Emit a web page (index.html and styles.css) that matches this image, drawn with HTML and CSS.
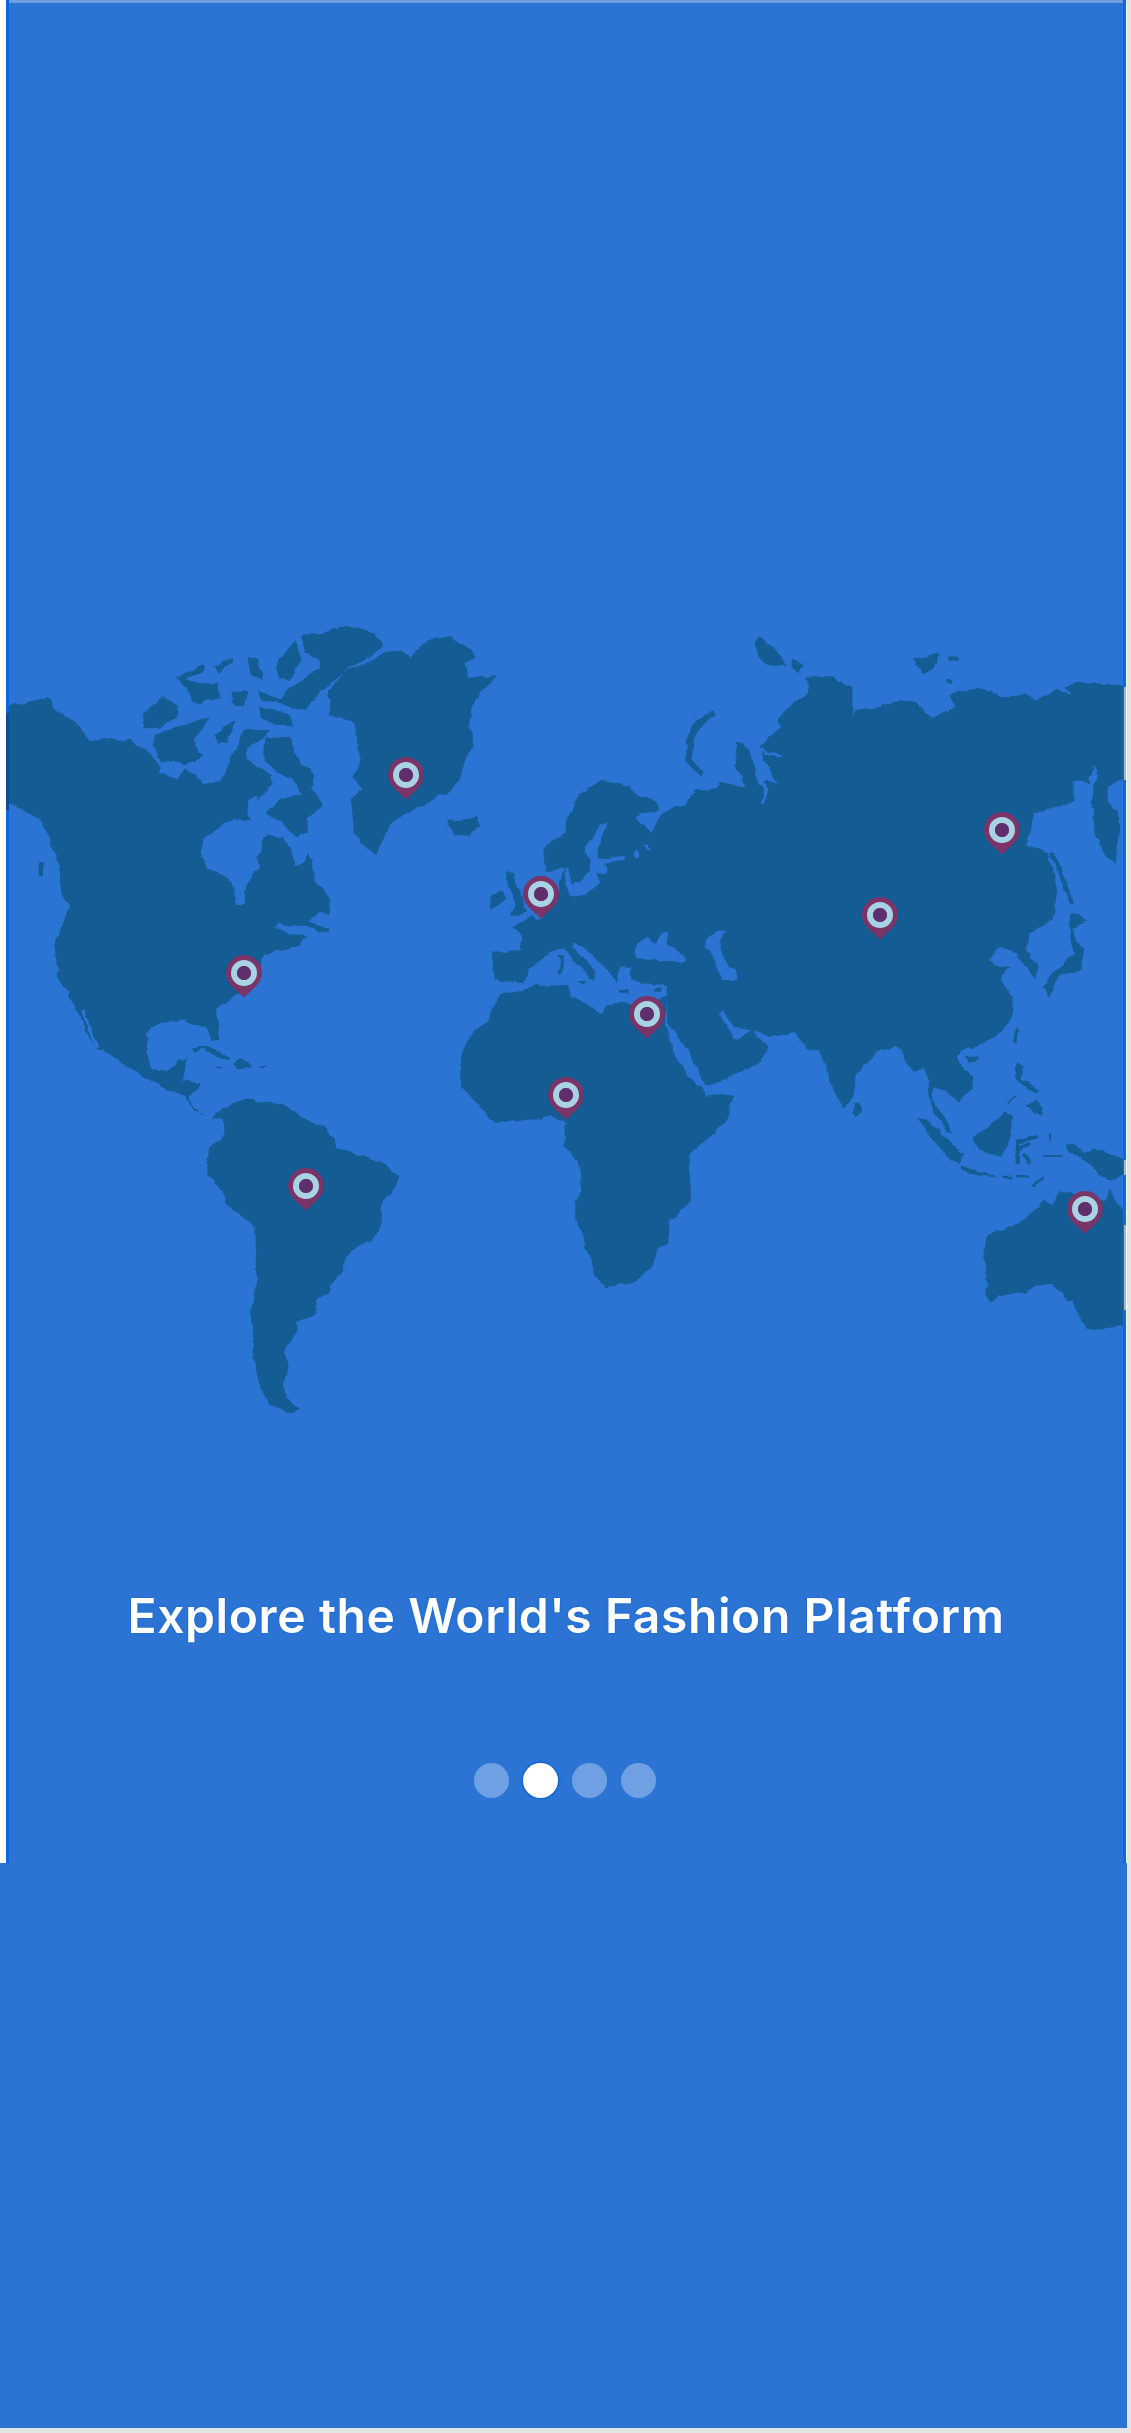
FILE: index.html
```html
<!DOCTYPE html>
<html lang="en">
<head>
<meta charset="UTF-8">
<meta name="viewport" content="width=device-width, initial-scale=1.0">
<title>Explore</title>
<link rel="stylesheet" href="styles.css">
</head>
<body>
<div class="screen">
    <div class="slide">
        <svg class="world-map" viewBox="6 620 1120 800" width="1120" height="800">
            <defs>
                <filter id="coast" x="-2%" y="-2%" width="104%" height="104%" color-interpolation-filters="sRGB">
                    <feTurbulence type="fractalNoise" baseFrequency=".07" numOctaves="3" seed="4" result="noise"/>
                    <feDisplacementMap in="SourceGraphic" in2="noise" scale="7" xChannelSelector="R" yChannelSelector="G"/>
                    <feGaussianBlur stdDeviation=".6"/>
                </filter>
                <g id="pin">
                    <path class="pin-body" d="M0 25C-4 19-18 12-18 0A18 18 0 1 1 18 0C18 12 4 19 0 25Z"/>
                    <circle class="pin-ring" r="10"/>
                    <circle class="pin-dot" r="7"/>
                </g>
            </defs>

            <g class="geo">
            <!-- north america, greenland, arctic islands -->
            <g class="land" transform="translate(0 600) scale(.3636 .3333)">
                <path d="M-20 335L60 310 130 295 155 330 200 360 250 420 300 412 360 420 410 460 445 495 440 515 490 535 510 505 560 545 600 545 625 510 640 460 670 390 740 390 720 420 680 440 680 480 720 510 750 530 700 590 685 600 680 640 690 655 640 660 600 685 560 720 550 760 570 800 640 850 648 915 670 915 678 855 712 800 705 770 735 700 775 710 800 745 810 795 830 795 850 760 870 850 912 900 905 945 880 935 850 965 905 985 905 998 845 978 770 975 760 985 795 1000 850 1015 790 1052 730 1062 722 1095 680 1170 600 1220 588 1260 600 1320 582 1322 565 1265 510 1250 440 1265 405 1300 400 1350 270 1350 240 1300 210 1230 190 1190 160 1130 150 1030 170 980 190 920 165 870 165 800 140 720 110 660 50 620 -20 600Z"/>
                <path d="M905 270L950 215 1000 190 1060 155 1100 150 1130 175 1140 150 1180 120 1240 115 1290 150 1310 175 1280 190 1290 230 1365 225 1340 260 1300 320 1290 380 1305 440 1280 470 1260 540 1235 575 1170 615 1090 655 1060 700 1035 765 1005 755 975 700 965 600 995 565 975 535 990 470 975 370 905 345Z"/>
                <path d="M1230 655L1260 660 1310 655 1320 680 1290 705 1250 710 1235 680Z"/>
                <path d="M830 110L880 100 960 75 1030 100 1050 135 1020 170 960 205 900 260 840 330 800 325 760 310 800 260 880 200 880 180 840 160Z"/>
                <path d="M765 180L810 120 830 180 790 240 765 240Z"/>
                <path d="M390 370L395 340 440 295 495 310 490 350 440 385 395 385Z"/>
                <path d="M430 400L530 370 580 350 530 420 560 470 510 490 440 480 420 440Z"/>
                <path d="M485 230L560 195 565 215 510 235 540 250 600 250 610 295 530 310 510 260Z"/>
                <path d="M590 195L635 175 635 190 600 215ZM680 170L710 175 720 240 690 225ZM640 270L680 280 670 320 640 310ZM710 270L750 290 790 300 770 310 720 300Z"/>
                <path d="M715 320L800 345 805 375 760 375 720 350Z"/>
                <path d="M590 400L645 365 625 430 600 435Z"/>
                <path d="M730 415L800 410 815 470 860 520 862 570 890 620 850 650 845 700 815 710 775 670 730 640 770 600 830 580 800 540 760 510 725 480Z"/>
                <path d="M690 565L745 530 750 550 710 600Z"/>
                <path d="M105 790L120 790 118 825 107 825Z"/>
            </g>

            <!-- florida, mexico, central and south america -->
            <g class="land" transform="translate(150 1000) scale(.3636 .3333)">
                <path d="M0 -5L210 -5 185 30 188 115 172 122 158 85 95 55 40 65 0 65Z"/>
                <path d="M-143 140L-14 140 -14 150 0 205 50 212 80 178 105 172 95 215 85 245 140 250 128 275 103 285 120 325 165 350 195 340 205 355 170 352 118 330 95 285 40 262 0 242Z"/>
                <path d="M115 145L160 140 215 170 220 180 190 175 150 150 115 155ZM230 190L250 175 285 190 280 200 235 205ZM185 198L200 198 200 205 185 205ZM305 198L320 200 320 204 305 204Z"/>
                <path d="M190 340L225 310 270 295 290 305 360 312 410 345 440 370 480 380 505 420 510 445 570 465 640 485 682 530 670 570 640 600 630 690 610 725 570 735 540 765 530 815 500 850 495 880 460 900 455 945 405 965 405 990 385 1020 370 1060 385 1100 365 1150 375 1190 412 1220 380 1238 335 1215 305 1170 285 1080 285 1020 280 940 292 860 290 680 270 660 225 630 195 570 160 520 165 440 205 400 200 365Z"/>
            </g>

            <!-- russia and central asia -->
            <g class="land" transform="translate(560 600) scale(.3642 .3333)">
                <path d="M270 660L300 625 340 610 370 570 430 565 445 545 510 565 480 500 480 430 500 430 530 460 548 560 570 545 600 550 560 480 550 440 570 410 612 382 595 360 640 310 680 280 675 235 750 235 800 265 800 340 790 355 810 330 880 320 930 300 980 310 1020 355 1080 320 1075 285 1150 260 1210 290 1280 280 1300 300 1370 270 1400 285 1385 260 1430 245 1560 258 1560 540 1510 555 1500 600 1535 640 1535 700 1520 790 1500 770 1465 690 1460 610 1475 510 1465 495 1455 550 1410 540 1410 600 1380 615 1300 640 1280 740 1340 760 1365 870 1355 960 1290 1000 1280 1050 1310 1100 1305 1135 1270 1085 1250 1060 1210 1045 1175 1080 1205 1100 1235 1100 1210 1130 1245 1200 320 1200 295 1150 270 1150Z"/>
                <path d="M535 125L550 115 610 165 620 195 570 195 545 170ZM630 175L670 190 650 225 635 200ZM970 175L1045 165 1030 200 1005 220 980 200ZM1062 168L1098 170 1095 180 1065 178ZM1055 240L1075 240 1075 255 1055 250Z"/>
                <path d="M1400 940L1450 960 1405 990 1435 1050 1435 1110 1370 1130 1340 1190 1325 1160 1345 1130 1410 1060 1400 1000Z"/>
            </g>
            <path class="land-line" transform="translate(560 600) scale(.3642 .3333)" d="M425 340C385 360 358 390 355 440 352 470 350 495 392 522"/>
            <path class="land-line thin" transform="translate(560 600) scale(.3642 .3333)" d="M1348 758L1368 800 1392 860 1405 910"/>

            <!-- europe -->
            <g class="land" transform="translate(440 770) scale(.3333)">
                <path d="M720 110L700 110 660 150 630 185 585 140 600 130 660 125 650 95 600 75 545 40 490 30 420 70 390 130 375 180 310 240 315 305 370 295 360 340 350 400 290 450 280 435 215 470 250 500 245 540 160 545 155 600 160 630 245 640 270 595 330 550 372 535 400 570 440 610 455 630 465 600 440 575 400 530 403 518 425 525 482 578 505 600 530 640 540 590 570 590 570 630 600 640 680 645 720 640Z"/>
                <path d="M205 305L225 310 230 350 250 380 260 425 210 440 225 400 205 350ZM150 380L190 360 195 390 155 420Z"/>
                <path d="M415 630L440 630 435 645ZM356 555L368 555 368 610 356 610ZM540 658L565 658 565 668 540 668ZM645 658L665 655 662 668 648 668Z"/>
            </g>

            <!-- baltic, black sea, caspian -->
            <g class="sea" transform="translate(440 770) scale(.3333)">
                <path d="M505 158L480 160 465 195 437 232 445 270 470 265 475 235 495 195Z"/>
                <path d="M470 262L445 268 450 300 420 340 395 345 385 295 372 295 378 340 390 380 430 372 480 338 470 310 500 312 490 278 560 268 555 258 490 265Z"/>
                <path d="M575 240L590 238 595 260 582 262ZM615 225L625 222 635 240 628 244Z"/>
                <path d="M585 570L590 520 620 500 650 520 670 490 690 490 680 520 730 555 735 575 700 575 640 565Z"/>
                <path d="M800 510L830 485 860 485 835 520 850 570 885 600 890 630 840 630 830 580 800 530Z"/>
            </g>
            <path class="sea-line" transform="translate(560 600) scale(.3642 .3333)" d="M525 445L550 540 565 570 555 605M550 445L610 475"/>
            <path class="sea-line" transform="translate(0 600) scale(.3636 .3333)" d="M225 1230L270 1345"/>

            <!-- africa and arabia -->
            <g class="land" transform="translate(440 960) scale(.3333)">
                <path d="M195 95L290 78 385 75 385 110 440 130 485 160 500 130 570 130 640 125 680 110 675 195 700 270 740 340 790 390 800 410 885 400 870 460 840 500 755 580 745 610 755 680 755 730 690 780 685 850 657 865 635 920 581 970 494 982 472 950 439 860 406 770 406 730 428 690 412 600 374 560 374 505 380 490 330 470 240 485 165 485 110 430 65 380 60 330 70 270 95 220 145 180 165 125Z"/>
                <path d="M680 70L840 60 840 165 880 230 900 235 940 205 950 230 985 262 950 315 880 345 800 380 770 320 725 250 682 190Z"/>
            </g>

            <!-- south asia, indonesia, australia -->
            <g class="land" transform="translate(700 1000) scale(.3333)">
                <path d="M-90 -10L940 -10 940 40 915 90 850 130 820 150 800 145 770 170 790 200 820 230 815 270 775 310 760 290 705 260 695 300 720 330 760 400 745 395 700 340 690 310 685 240 670 210 640 215 625 180 590 140 545 150 500 190 470 225 460 290 430 320 400 260 370 190 360 155 320 150 285 100 205 105 160 90 105 85 70 38 60 40 0 30Z"/>
                <path d="M462 310L475 305 485 335 470 348 460 335Z"/>
                <path d="M650 355L680 358 720 390 765 440 790 460 780 495 750 485 710 430 670 385Z"/>
                <path d="M780 500L830 510 890 530 885 535 830 525 790 515ZM905 530L940 530 940 537 905 537ZM950 528L990 526 985 534 955 536ZM995 550L1030 530 1032 540 1000 556Z"/>
                <path d="M820 410L870 380 915 340 940 350 930 410 905 470 860 460 830 440Z"/>
                <path d="M945 200L960 180 975 200 965 235 985 245 1015 275 1000 280 970 250 950 235ZM980 320L1010 305 1035 320 1025 348 1005 340ZM925 305L942 285 945 290 930 308ZM945 85L952 85 950 130 940 125ZM803 170L830 170 825 185 805 185Z"/>
                <path d="M1095 430L1125 430 1150 460 1185 445 1240 465 1285 485 1285 510 1240 540 1195 530 1170 490 1130 465 1100 450ZM1050 400L1058 400 1055 430 1048 430ZM1030 465L1085 465 1085 471 1030 471Z"/>
                <path d="M1000 630L1030 600 1060 615 1075 575 1110 570 1160 600 1215 600 1228 565 1245 600 1285 640 1285 975 1220 985 1205 990 1160 985 1140 960 1120 900 1100 905 1085 880 1060 855 1010 855 970 880 895 885 870 905 850 885 865 850 850 770 860 705 920 685 965 665Z"/>
            </g>
            <path class="land-line thin" transform="translate(700 1000) scale(.3333)" d="M950 490L955 425 1015 408M960 445L990 430M970 460L990 490"/>
            </g>

            <!-- the map runs under the edge strips -->
            <rect class="edge-left" x="6" y="620" width="3" height="800"/>
            <rect class="edge-right" x="1123" y="620" width="3" height="800"/>
            <rect class="edge-navy" x="6" y="713" width="3" height="97"/>
            <rect class="edge-grey" x="1124" y="687" width="2" height="93"/>
            <rect class="edge-grey" x="1124" y="1160" width="2" height="15"/>
            <rect class="edge-grey" x="1124" y="1225" width="2" height="85"/>

            <g class="pins">
                <use href="#pin" x="406" y="775"/>
                <use href="#pin" x="244" y="973"/>
                <use href="#pin" x="541" y="894"/>
                <use href="#pin" x="1002" y="830"/>
                <use href="#pin" x="880" y="915"/>
                <use href="#pin" x="647" y="1014"/>
                <use href="#pin" x="306" y="1186"/>
                <use href="#pin" x="566" y="1095"/>
                <use href="#pin" x="1085" y="1209"/>
            </g>
        </svg>
        <h1 class="title">Explore the World's Fashion Platform</h1>
        <div class="dots">
            <span class="dot"></span>
            <span class="dot active"></span>
            <span class="dot"></span>
            <span class="dot"></span>
        </div>
    </div>
    <div class="bottom-panel"></div>
</div>
</body>
</html>
```

FILE: styles.css
```css
html,
body {
    margin: 0;
    background-color: #e2e3e3;
}

.screen {
    width: 1127px;
    height: 2428px;
    display: flex;
    flex-direction: column;
    background-color: #fff;
}

.slide {
    margin-left: 6px;
    width: 1120px;
    height: 1863px;
    display: flex;
    flex-direction: column;
    align-items: center;
    background-color: #2b74d3;
    box-shadow: inset 3px 0 #0a66dd, inset -3px 0 #0a6ae0, inset 0 3px #6f9de0;
}

.world-map {
    display: block;
    flex: none;
    margin-top: 620px;
}

.geo {
    filter: url(#coast);
}

.land path {
    fill: #135c94;
}

.land-line {
    fill: none;
    stroke: #135c94;
    stroke-width: 20;
}

.land-line.thin {
    stroke-width: 12;
}

.sea path {
    fill: #2b74d3;
}

.sea-line {
    fill: none;
    stroke: #2b74d3;
    stroke-width: 9;
}

.edge-left {
    fill: #0a66dd;
}

.edge-right {
    fill: #0a6ae0;
}

.edge-navy {
    fill: #0d4a94;
}

.edge-grey {
    fill: #a9b6c2;
}

.pins {
    filter: blur(.6px);
}

.pin-body {
    fill: #7a3467;
}

.pin-ring {
    fill: none;
    stroke: #a8d3e4;
    stroke-width: 6;
}

.pin-dot {
    fill: #5f2f6d;
}

.title {
    margin: 167px 0 0;
    font-family: Inter, "Liberation Sans", sans-serif;
    font-size: 48px;
    font-weight: 600;
    letter-spacing: .6px;
    line-height: 57px;
    color: #fff;
    text-shadow: 0 0 2px #0b5ed7;
    white-space: nowrap;
    filter: blur(.4px);
}

.dots {
    display: flex;
    gap: 14px;
    margin: 119px 2px 0 0;
}

.dot {
    width: 35px;
    height: 35px;
    border-radius: 50%;
    background-color: #6fa0e3;
}

.dot.active {
    background-color: #fff;
    box-shadow: 0 0 2px 1px #0b5ed7;
}

.bottom-panel {
    flex: 1;
    background-color: #2b74d3;
}
```
